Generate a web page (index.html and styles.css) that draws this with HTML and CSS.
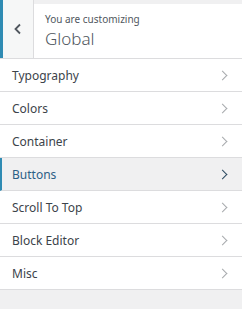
FILE: index.html
```html
<!DOCTYPE html>
<html>
<head>
    <title>Customizer - Global</title>
    <link rel="stylesheet" href="styles.css">
</head>
<body>
    <div class="panel">
        <div class="head">
            <button class="back" aria-label="Back">
                <svg width="10" height="12" viewBox="0 0 10 12"><path d="M7 1.5 L2.5 6 L7 10.5" fill="none" stroke="#50575e" stroke-width="1.8"/></svg>
            </button>
            <div class="title">
                <span class="small">You are customizing</span>
                <span class="big">Global</span>
            </div>
        </div>
        <ul class="sections">
            <li>Typography <span class="chev"></span></li>
            <li>Colors <span class="chev"></span></li>
            <li>Container <span class="chev"></span></li>
            <li class="active">Buttons <span class="chev"></span></li>
            <li>Scroll To Top <span class="chev"></span></li>
            <li>Block Editor <span class="chev"></span></li>
            <li>Misc <span class="chev"></span></li>
        </ul>
    </div>
</body>
</html>
```

FILE: styles.css
```css
body {
    margin: 0;
    background: #f0f0f1;
    font-family: "Noto Sans", "Open Sans", sans-serif;
    color: #50575e;
}
.head {
    display: flex;
    height: 58px;
    border-bottom: 1px solid #dcdcde;
}
.back {
    width: 34px;
    border: none;
    border-left: 3px solid #2f8bb3;
    border-right: 1px solid #dcdcde;
    background: #f6f7f7;
    padding: 0;
    display: flex;
    align-items: center;
    justify-content: center;
}
.title {
    flex: 1;
    margin-top: 4px;
    background: #fff;
    display: flex;
    flex-direction: column;
    justify-content: center;
    padding-left: 11px;
}
.small {
    font-size: 10px;
    line-height: 14px;
    color: #50575e;
}
.big {
    font-size: 17px;
    font-weight: 300;
    line-height: 22px;
    color: #50575e;
    margin-top: 2px;
}
.sections {
    list-style: none;
    margin: 0;
    padding: 0;
}
.sections li {
    height: 32px;
    border-bottom: 1px solid #dcdcde;
    background: #fff;
    display: flex;
    align-items: center;
    justify-content: space-between;
    padding: 0 12px 0 12px;
    font-size: 12px;
    color: #3c434a;
}
.chev {
    width: 6px;
    height: 6px;
    border-top: 1.5px solid #a7aaad;
    border-right: 1.5px solid #a7aaad;
    transform: rotate(45deg);
    margin-right: 4px;
}
.sections li.active {
    background: #f0f0f1;
    border-left: 2px solid #2f8bb3;
    padding-left: 10px;
    color: #2c5f86;
}
.sections li.active .chev {
    border-color: #2c4a60;
}
```
